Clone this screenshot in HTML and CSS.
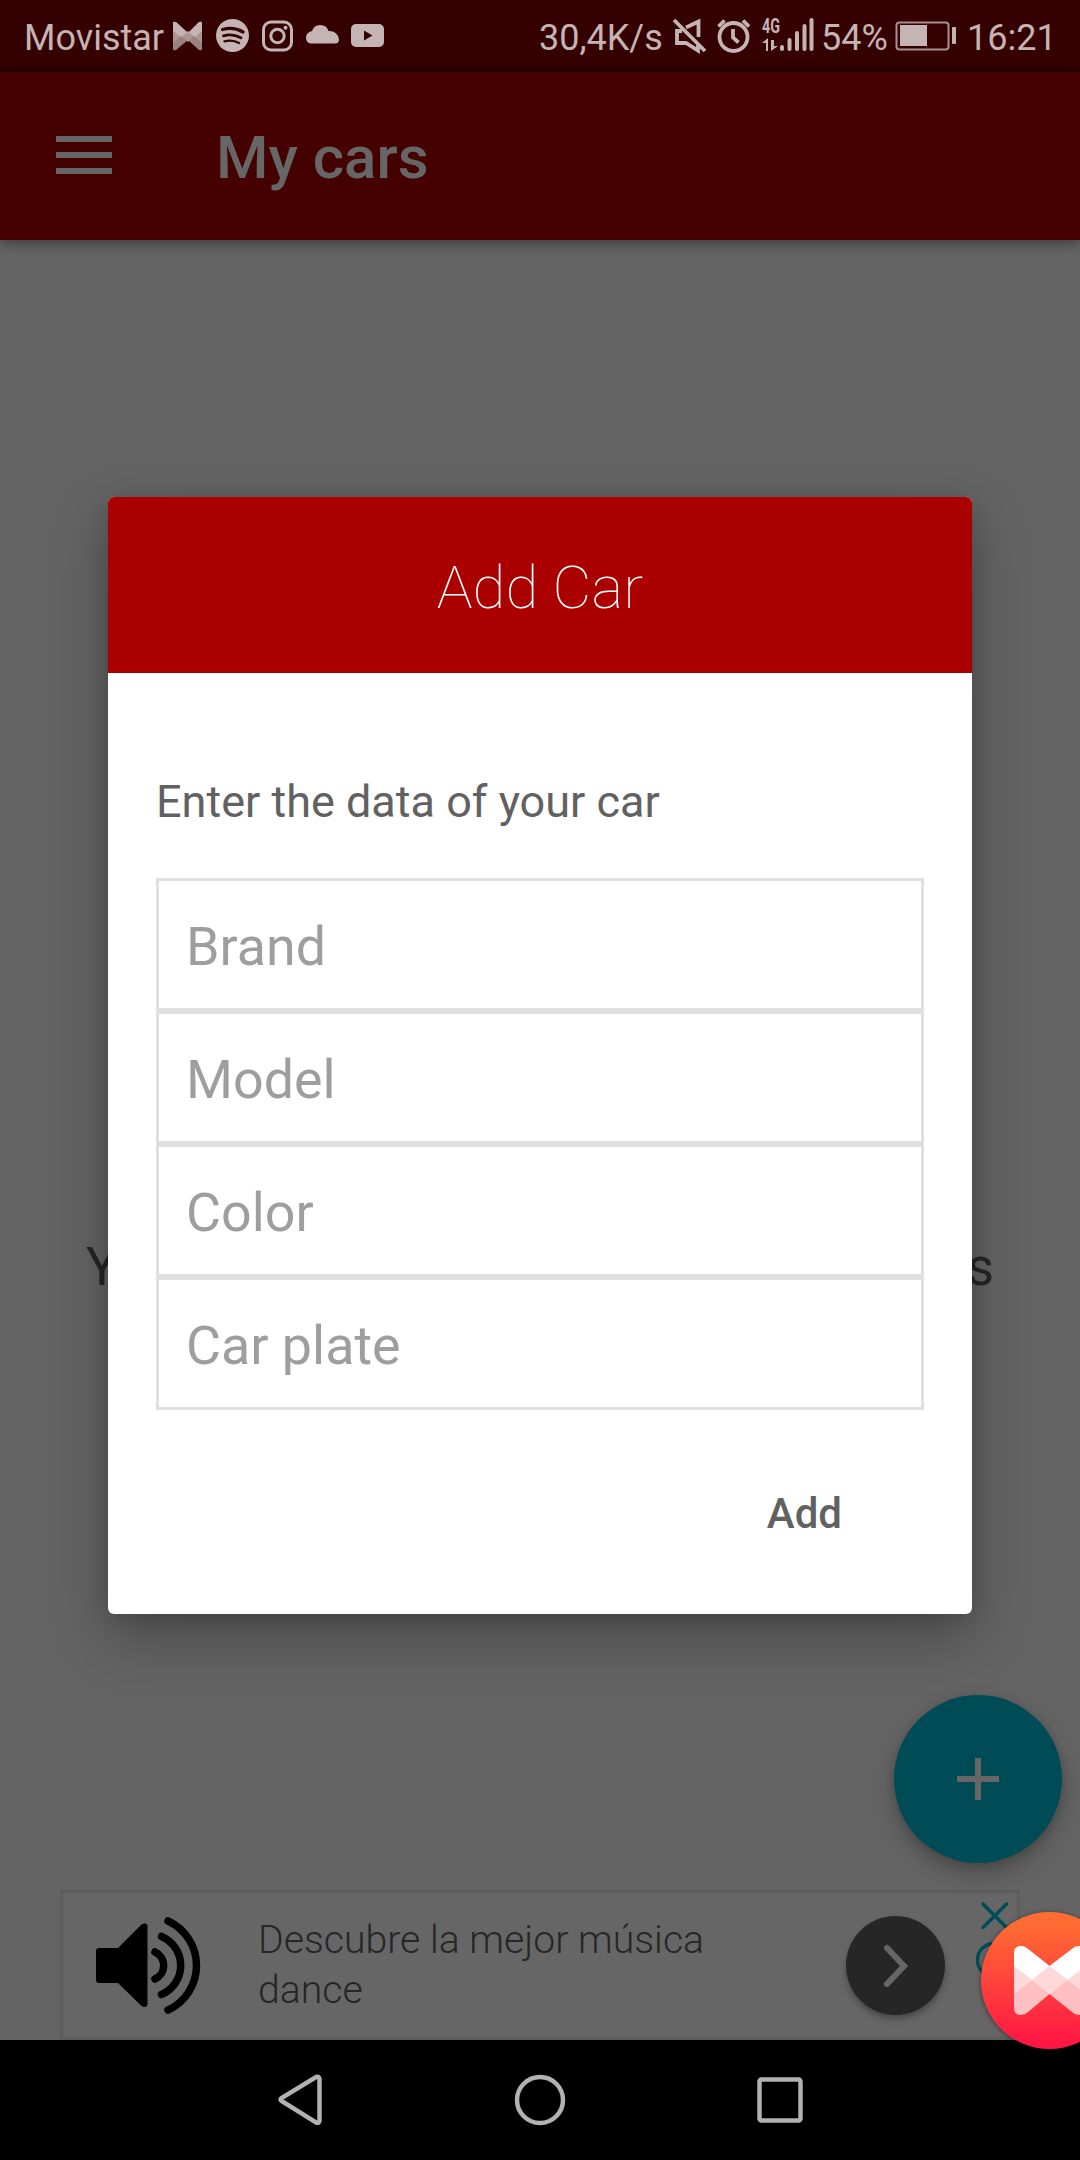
FILE: index.html
```html
<!DOCTYPE html>
<html lang="en">
<head>
<meta charset="utf-8">
<title>My cars</title>
<link rel="stylesheet" href="styles.css">
</head>
<body>
<div class="screen">
  <div class="status">
    <span class="carrier">Movistar</span>
    <svg class="notifications" width="214" height="36" viewBox="172 19 214 36" fill="#c5b4b4">
      <path d="M173 24q0-2 3-1L188 34 199 23q3-1 3 1v26q0 2-3 1L188 41 176 51q-3 1-3-1z" fill="#9a8080"/>
      <path d="M173 31l8 6-8 7zM202 31l-8 6 8 7zM188 32l-7 5 7 6 6-6z" fill="#ab9595"/>
      <path d="M173 24q0-2 3-1L188 34 199 23q3-1 3 1v8l-7 6-7-5-7 5-8-6z"/>
      <circle cx="232.500" cy="36.500" r="16.500"/>
      <g fill="none" stroke="#350000" stroke-linecap="round"><path d="M222.500 30.500q11-3 20.500 2.500" stroke-width="3.200"/><path d="M223.500 36.800q9-2.500 17.500 2" stroke-width="2.800"/><path d="M224.500 42.300q8-2 14.500 1.700" stroke-width="2.400"/></g>
      <g fill="none" stroke="#c5b4b4"><rect x="263.500" y="23" width="28" height="28" rx="7.500" stroke-width="3"/><circle cx="277.500" cy="37" r="6.700" stroke-width="3"/></g><circle cx="285.500" cy="28.800" r="2"/>
      <path d="M311 44.500q-5-.5-5-6 0-5 6-6.500 2-6 8-6 7 0 8.500 6 9-.5 10.500 8.500 0 4-4 4z"/>
      <rect x="351" y="25" width="33" height="23" rx="5"/><path d="M364 31.500v10l8.500-5z" fill="#350000"/>
    </svg>
    <span class="rate">30,4K/s</span>
    <svg class="signals" width="144" height="48" viewBox="672 13 144 48" fill="none" stroke="#c5b4b4" stroke-width="3.800">
      <path d="M674 21l31 31M686 28.500l12.500-6V38M682 32h-5v12h9l12 7.500v-7"/>
      <circle cx="733.500" cy="38" r="14"/><path d="M718.500 27.500l6-6M749 27.500l-6-6M733 30v8.500l5.500 5"/>
      <g fill="#c5b4b4" stroke="none"><text class="net" x="762" y="34" textLength="18" lengthAdjust="spacingAndGlyphs">4G</text><path d="M766 52v-8h-4l6-5v13zM771 41v11l7-5h-4v-6z"/></g>
      <path stroke-width="4" stroke-linecap="round" d="M782 48v2M789.500 41v9M797 34v16M804.500 27v23M811.500 21v29"/>
    </svg>
    <span class="percent">54%</span>
    <svg class="battery" width="62" height="32" viewBox="895 22 62 32"><rect x="896.500" y="24.500" width="52" height="27" rx="3" fill="none" stroke="#a98f8f" stroke-width="2"/><path d="M900 27h27v21h-27zM952 30q0-1 1-1h2q1 0 1 1v15q0 1-1 1h-2q-1 0-1-1z" fill="#c5b4b4"/></svg>
    <span class="clock">16:21</span>
  </div>
  <header class="appbar">
    <svg width="56" height="38" viewBox="0 0 56 38" fill="#666"><path d="M0 0h56v6H0zM0 16h56v6H0zM0 32h56v6H0z"/></svg>
    <h1>My cars</h1>
  </header>
  <main class="content">
    <p class="empty">You have not added a car to your cars</p>
    <div class="ad">
      <svg class="speaker" width="108" height="100" viewBox="95 1916 108 100"><path d="M99 1948h19l23-23q2-2 4-1.500 2.500 0 2.500 3v77q0 3-2.500 3.500-2 0-4-1.500l-23-22.500h-19q-3 0-3-3v-29q0-3 3-3z"/><g fill="none" stroke="#000" stroke-width="7.500" stroke-linecap="round"><path d="M155 1952a14.800 14.800 0 0 1 0 27"/><path d="M161.500 1936.500a31.500 31.500 0 0 1 0 58"/><path d="M168 1921a49 49 0 0 1 0 89"/></g></svg>
      <p class="ad-text">Descubre la mejor música dance</p>
      <div class="ad-go"><svg width="26" height="44" viewBox="0 0 26 44"><path d="M4 4l17 18L4 40" fill="none" stroke="#666" stroke-width="6" stroke-linecap="round"/></svg></div>
      <svg class="ad-opts" width="40" height="80" viewBox="974 1900 40 80" fill="none" stroke="#004c56" stroke-width="3.500" stroke-linecap="round"><path d="M983 1904l23.500 23.500M1006.500 1904L983 1927.500"/><circle cx="994" cy="1960" r="16.500"/></svg>
    </div>
  </main>
  <nav class="navbar">
    <svg width="44" height="52" viewBox="0 0 44 52"><path d="M3.500 24q-2 1.500 0 3L38 48.500q3.500 1 3.500-2v-41q0-3.500-3.500-2.500z"/></svg>
    <svg width="52" height="52" viewBox="0 0 52 52"><circle cx="26" cy="26" r="23"/></svg>
    <svg width="46" height="46" viewBox="0 0 46 46"><rect x="2.500" y="2.500" width="41" height="41" rx="2"/></svg>
  </nav>
  <button class="fab"><svg width="42" height="42" viewBox="0 0 42 42" fill="#666"><path d="M18 0h6v18h18v6H24v18h-6V24H0v-6h18z"/></svg></button>
  <section class="dialog">
    <h2>Add Car</h2>
    <div class="form">
      <p class="prompt">Enter the data of your car</p>
      <div class="field">Brand</div>
      <div class="field">Model</div>
      <div class="field">Color</div>
      <div class="field">Car plate</div>
      <button class="add">Add</button>
    </div>
  </section>
  <div class="bubble">
    <svg width="137" height="137" viewBox="0 0 137 137"><path d="M33 41q0-7 7-7 4 0 7 3L68.500 54 91 37q3-3 7-3 7 0 7 7v55q0 7-7 7-4 0-7-3L68.500 82 47 100q-3 3-7 3-7 0-7-7z" fill="#ffc0c4"/><path d="M33 54L51 68 33 82zM105 54L86.500 68 105 82zM68.500 54L51 68 68.500 82 86.500 68z" fill="#ffd9da"/><path d="M33 41q0-7 7-7 4 0 7 3L68.500 54 91 37q3-3 7-3 7 0 7 7v13L86.500 68 68.500 54 51 68 33 54z" fill="#fff"/></svg>
  </div>
</div>
</body>
</html>
```
FILE: styles.css
```css
* { box-sizing: border-box; margin: 0; padding: 0; }
body { font-family: Roboto, "Noto Sans", sans-serif; }
button { border: 0; background: none; font: inherit; }
svg { display: block; flex: none; }

.screen { position: relative; width: 1080px; height: 2160px; overflow: hidden; background: #646464; display: flex; flex-direction: column; }

.status { height: 72px; flex: none; display: flex; align-items: center; padding-left: 24px; background: linear-gradient(#350000 66px, #2a0000); color: #c5b4b4; font-size: 36px; white-space: nowrap; }
.carrier, .rate, .percent, .clock { line-height: 44px; padding-top: 4px; }
.carrier { width: 148px; }
.rate { width: 133px; margin-left: 153px; }
.percent { width: 74px; margin-left: 5px; }
.clock { margin-left: 10px; }
.signals { overflow: visible; }
.net { font: 700 20px Roboto, sans-serif; }

.appbar { position: relative; height: 168px; flex: none; display: flex; align-items: flex-start; gap: 104px; padding: 64px 0 0 56px; background: #450000; box-shadow: 0 2px 14px rgba(0, 0, 0, .45); }
.appbar h1 { margin-top: -13px; font-size: 60px; line-height: 70px; font-weight: 500; color: #666; }

.content { flex: 1; display: flex; flex-direction: column; align-items: center; justify-content: space-between; padding-top: 996px; }
.empty { width: 908px; font-size: 53px; line-height: 62px; color: #262626; text-align-last: justify; }
.ad { width: 960px; height: 150px; border: 3px solid #5d5d5d; background: #666; display: flex; align-items: flex-start; }
.speaker { margin: 23px 0 0 32px; }
.ad-text { width: 480px; margin: 22px 0 0 55px; font-size: 39.2px; line-height: 50px; font-weight: 300; color: #262626; }
.ad-go { width: 99px; height: 99px; margin: 23px 0 0 108px; border-radius: 50%; background: #262626; display: flex; align-items: center; justify-content: center; box-shadow: 0 4px 6px rgba(0, 0, 0, .3); }
.ad-opts { margin: 7px 0 0 29px; }

.navbar { height: 120px; flex: none; background: #000; display: flex; align-items: center; padding-left: 278px; gap: 192px; }
.navbar svg { fill: none; stroke: #b2b2b2; stroke-width: 4.5; }
.navbar svg:last-child { margin-left: -1px; }

.fab { position: absolute; left: 894px; top: 1695px; width: 168px; height: 168px; border-radius: 50%; background: #004c56; display: flex; align-items: center; justify-content: center; box-shadow: 0 10px 22px rgba(0, 0, 0, .25), 0 2px 8px rgba(0, 0, 0, .12); }

.dialog { position: absolute; left: 108px; top: 497px; width: 864px; height: 1117px; border-radius: 6px; overflow: hidden; background: #fff; box-shadow: 0 24px 60px rgba(0, 0, 0, .27), 0 4px 20px rgba(0, 0, 0, .14); }
.dialog h2 { height: 176px; padding-top: 56px; background: #aa0000; color: #fff; text-align: center; font-size: 60px; line-height: 70px; font-weight: 100; }
.form { display: flex; flex-direction: column; padding: 102px 48px 0; }
.prompt { height: 103px; font-size: 45px; line-height: 54px; color: #616161; }
.field { height: 133px; border: 3px solid #dfdfdf; padding: 0 27px; font-size: 53.8px; line-height: 132px; color: #9e9e9e; }
.add { align-self: flex-end; margin: 79px 82px 0 0; font-size: 42px; line-height: 50px; font-weight: 500; color: #616161; }

.bubble { position: absolute; left: 981px; top: 1912px; width: 137px; height: 137px; border-radius: 50%; background: linear-gradient(#ff6b32 10%, #ff1744 95%); box-shadow: 0 1px 5px rgba(0, 0, 0, .5); }
```
